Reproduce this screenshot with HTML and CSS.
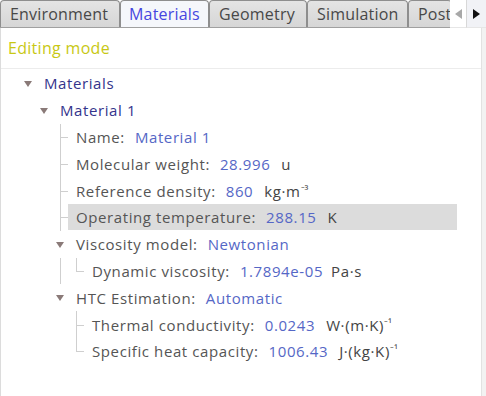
FILE: index.html
```html
<!DOCTYPE html>
<html lang="en">
<head>
    <meta charset="UTF-8">
    <title>Materials</title>
    <link rel="stylesheet" href="styles.css">
</head>
<body>
    <div class="tabbar">
        <div class="tabs">
            <div class="tab tab-env">Environment</div>
            <div class="tab tab-mat active">Materials</div>
            <div class="tab tab-geo">Geometry</div>
            <div class="tab tab-sim">Simulation</div>
            <div class="tab">Post</div>
        </div>
        <div class="scroll-left"><span class="arrow-left"></span></div>
        <div class="scroll-right"><span class="arrow-right"></span></div>
    </div>

    <div class="panel">
        <div class="mode">Editing mode</div>
        <div class="tree">
            <div class="row">
                <span class="unit"></span><span class="unit caret"></span>
                <span class="text group">Materials</span>
            </div>
            <div class="row">
                <span class="unit"></span><span class="unit"></span><span class="unit caret"></span>
                <span class="text group">Material 1</span>
            </div>
            <div class="row">
                <span class="unit"></span><span class="unit"></span><span class="unit"></span><span class="unit branch"></span>
                <span class="text"><span class="label">Name:</span><span class="value">Material 1</span></span>
            </div>
            <div class="row">
                <span class="unit"></span><span class="unit"></span><span class="unit"></span><span class="unit branch"></span>
                <span class="text"><span class="label">Molecular weight:</span><span class="value">28.996</span><span class="unit-name">u</span></span>
            </div>
            <div class="row">
                <span class="unit"></span><span class="unit"></span><span class="unit"></span><span class="unit branch"></span>
                <span class="text"><span class="label">Reference density:</span><span class="value">860</span><span class="unit-name">kg·m<span class="exp">⁻³</span></span></span>
            </div>
            <div class="row">
                <span class="unit"></span><span class="unit"></span><span class="unit"></span><span class="unit branch"></span>
                <span class="text selected"><span class="label">Operating temperature:</span><span class="value">288.15</span><span class="unit-name">K</span></span>
            </div>
            <div class="row">
                <span class="unit"></span><span class="unit"></span><span class="unit"></span><span class="unit caret"></span>
                <span class="text"><span class="label">Viscosity model:</span><span class="value">Newtonian</span></span>
            </div>
            <div class="row">
                <span class="unit"></span><span class="unit"></span><span class="unit"></span><span class="unit pipe"></span><span class="unit elbow"></span>
                <span class="text"><span class="label">Dynamic viscosity:</span><span class="value">1.7894e-05</span><span class="unit-name tight">Pa·s</span></span>
            </div>
            <div class="row">
                <span class="unit"></span><span class="unit"></span><span class="unit"></span><span class="unit caret"></span>
                <span class="text"><span class="label">HTC Estimation:</span><span class="value">Automatic</span></span>
            </div>
            <div class="row">
                <span class="unit"></span><span class="unit"></span><span class="unit"></span><span class="unit"></span><span class="unit branch"></span>
                <span class="text"><span class="label">Thermal conductivity:</span><span class="value">0.0243</span><span class="unit-name">W·(m·K)<span class="exp">⁻¹</span></span></span>
            </div>
            <div class="row">
                <span class="unit"></span><span class="unit"></span><span class="unit"></span><span class="unit"></span><span class="unit elbow"></span>
                <span class="text"><span class="label">Specific heat capacity:</span><span class="value">1006.43</span><span class="unit-name">J·(kg·K)<span class="exp">⁻¹</span></span></span>
            </div>
        </div>
    </div>
</body>
</html>
```

FILE: styles.css
```css
body {
    margin: 0;
    width: 486px;
    height: 396px;
    overflow: hidden;
    background: #f2f2f2;
    font-family: "Open Sans", sans-serif;
}

.tabbar {
    display: flex;
    height: 28px;
    background: #fff;
}

.tabs {
    display: flex;
    width: 450px;
    overflow: hidden;
    border-bottom: 1px solid #a0a0a0;
    box-sizing: border-box;
}

.tab {
    flex: none;
    height: 27px;
    box-sizing: border-box;
    padding: 0 0 0 9px;
    border: 1px solid #8e8e8e;
    border-bottom: none;
    border-radius: 4px 4px 0 0;
    background: linear-gradient(#e4e4e4, #d6d6d6);
    color: #484848;
    font-size: 16px;
    letter-spacing: 0.2px;
    line-height: 26px;
    white-space: nowrap;
}

.tab-env { width: 120px; }
.tab-mat { width: 89px; padding-left: 8px; }
.tab-geo { width: 98px; }
.tab-sim { width: 101px; }

.tab.active {
    height: 28px;
    background: #f5f7fb;
    color: #4646e0;
}

.scroll-left {
    width: 16px;
    display: flex;
    align-items: center;
    justify-content: center;
    border-bottom: 1px solid #e6e6e6;
    box-sizing: border-box;
}

.scroll-right {
    flex: 1;
    display: flex;
    align-items: center;
    justify-content: center;
    background: #f1f2f6;
    border-left: 1px solid #d8d8d8;
    border-bottom: 1px solid #e6e6e6;
    box-sizing: border-box;
}

.arrow-left {
    width: 0;
    height: 0;
    border-top: 5px solid transparent;
    border-bottom: 5px solid transparent;
    border-right: 7px solid #a8a8a8;
}

.arrow-right {
    width: 0;
    height: 0;
    border-top: 5px solid transparent;
    border-bottom: 5px solid transparent;
    border-left: 7px solid #111;
}

.panel {
    width: 482px;
    height: 368px;
    box-sizing: border-box;
    background: #fff;
    border-left: 1px solid #dcdcdc;
    border-right: 1px solid #e2e2e2;
}

.mode {
    height: 41px;
    box-sizing: border-box;
    padding: 8px 0 0 7px;
    border-bottom: 1px solid #ececec;
    color: #c8c814;
    font-size: 16px;
    letter-spacing: 0.3px;
    line-height: 24px;
}

.tree {
    padding: 1px 0 0 3px;
    font-size: 15px;
    letter-spacing: 0.6px;
}

.row {
    display: flex;
    height: 26.8px;
    align-items: stretch;
}

.unit {
    flex: none;
    width: 16px;
    position: relative;
}

.pipe::before,
.branch::before,
.elbow::before {
    content: "";
    position: absolute;
    left: 8px;
    top: 0;
    width: 1px;
    height: 100%;
    background: #cfcfcf;
}

.elbow::before {
    height: 50%;
}

.branch::after,
.elbow::after {
    content: "";
    position: absolute;
    left: 8px;
    top: 50%;
    width: 8px;
    height: 1px;
    background: #cfcfcf;
}

.caret::before {
    content: "";
    position: absolute;
    left: 4px;
    top: 11px;
    border-left: 4px solid transparent;
    border-right: 4px solid transparent;
    border-top: 6px solid #8a7a78;
}

.text {
    display: flex;
    align-items: center;
    padding-left: 8px;
    white-space: nowrap;
}

.text.selected {
    width: 381px;
    margin: 0 0 1px 0;
    background: #dcdcdc;
}

.group {
    color: #34348c;
}

.label {
    color: #555;
}

.value {
    margin-left: 10px;
    color: #5567c6;
}

.unit-name {
    margin-left: 11px;
    color: #444;
}

.unit-name.tight {
    margin-left: 8px;
}

.exp {
    font-size: 11px;
    letter-spacing: 0;
    position: relative;
    top: -3px;
}
```
